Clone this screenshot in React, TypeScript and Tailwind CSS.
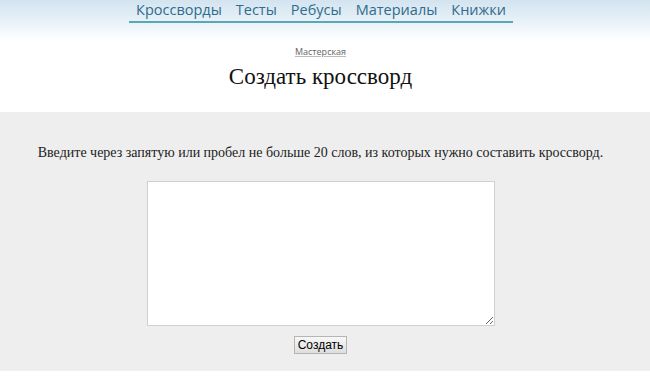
const navItems = ['Кроссворды', 'Тесты', 'Ребусы', 'Материалы', 'Книжки'];

export default function App() {
  return (
    <div className="min-h-[391px] w-[650px] bg-white" style={{ fontFamily: '"Liberation Serif", serif' }}>
      {/* sky header */}
      <div className="h-[40px] bg-gradient-to-b from-[#d3e4f0] via-[#e6f0f7] to-white">
        <div className="flex justify-center pr-[8px]">
          <nav
            className="flex gap-[14px] border-b-2 border-[#58a8b8] px-[7px] pb-[1px] text-[14.5px] leading-[20px] text-[#2f6c8c]"
            style={{ fontFamily: '"Open Sans", sans-serif' }}
          >
            {navItems.map((item) => (
              <a key={item} href="#" className="no-underline">
                {item}
              </a>
            ))}
          </nav>
        </div>
      </div>

      {/* title */}
      <div className="flex h-[72px] flex-col items-center pr-[9px] pt-[6px]">
        <a
          href="#"
          className="text-[9px] leading-[12px] text-[#666] underline decoration-[#bbb]"
          style={{ fontFamily: '"Open Sans", sans-serif' }}
        >
          Мастерская
        </a>
        <h1 className="mt-[6px] text-[23px] leading-[26px] text-[#111]">Создать кроссворд</h1>
      </div>

      {/* form */}
      <div className="flex h-[259px] flex-col items-center bg-[#eeeeee] pr-[9px] pt-[32px]">
        <p className="text-[14px] leading-[18px] text-[#222]">
          Введите через запятую или пробел не больше 20 слов, из которых нужно составить кроссворд.
        </p>
        <textarea className="mt-[19px] h-[145px] w-[348px] resize border border-[#d0d0d0] bg-white" />
        <button
          className="mt-[10px] border border-[#b5b5b5] bg-gradient-to-b from-[#f8f8f8] to-[#dedede] px-[3px] text-[12px] leading-[16px] text-black"
          style={{ fontFamily: '"Liberation Sans", sans-serif' }}
        >
          Создать
        </button>
      </div>
    </div>
  );
}
